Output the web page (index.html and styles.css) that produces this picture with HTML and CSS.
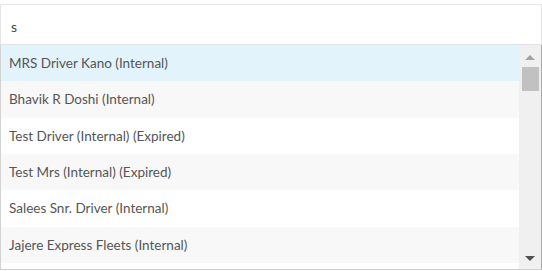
FILE: index.html
```html
<!DOCTYPE html>
<html lang="en">
<head>
  <meta charset="UTF-8">
  <title>Driver picker</title>
  <link rel="stylesheet" href="styles.css">
</head>
<body>
  <!-- Search field with its dropdown of matches -->
  <div class="picker">
    <div class="search">s</div>

    <div class="list">
      <ul class="rows">
        <li class="row active">MRS Driver Kano (Internal)</li>
        <li class="row">Bhavik R Doshi (Internal)</li>
        <li class="row">Test Driver (Internal) (Expired)</li>
        <li class="row">Test Mrs (Internal) (Expired)</li>
        <li class="row">Salees Snr. Driver (Internal)</li>
        <li class="row">Jajere Express Fleets (Internal)</li>
      </ul>

      <!-- Scrollbar drawn by hand -->
      <div class="scrollbar">
        <span class="arrow up"></span>
        <span class="thumb"></span>
        <span class="track"></span>
        <span class="arrow down"></span>
      </div>
    </div>
  </div>
</body>
</html>
```

FILE: styles.css
```css
/* Base page */
body {
  margin: 0;
  background: #ffffff;
  font-family: Lato, "Open Sans", sans-serif;
  font-size: 13.5px;
  color: #555555;
}

.picker {
  width: 542px;
  padding-top: 4px;
}

/* Search box */
.search {
  width: 530px;
  height: 39px;
  padding-left: 10px;
  border: 1px solid #e4e4e4;
  line-height: 43px;
  font-size: 14px;
  color: #444;
}

/* Dropdown list */
.list {
  display: flex;
  height: 224px;
  border-left: 1px solid #d2d2d2;
  border-right: 1px solid #a9a9a9;
  border-bottom: 1px solid #cfcfcf;
}

.rows {
  flex: 1;
  margin: 0;
  padding: 0;
  list-style: none;
}

.row {
  height: 36.33px;
  padding-left: 8px;
  line-height: 37px;
  white-space: nowrap;
}

.row:nth-child(even) {
  background: #f8f8f8;
}

.row.active {
  background: #e3f3fb;
}

/* Fake scrollbar */
.scrollbar {
  width: 22px;
  display: flex;
  flex-direction: column;
  align-items: center;
  background: #f0f0f0;
}

.arrow {
  width: 0;
  height: 0;
  border-left: 5px solid transparent;
  border-right: 5px solid transparent;
}

.arrow.up {
  margin: 10px 0 7px;
  border-bottom: 5px solid #a3a3a3;
}

.arrow.down {
  margin: 0 0 8px;
  border-top: 5px solid #505050;
}

.thumb {
  width: 17px;
  height: 24px;
  background: #c1c1c1;
}

.track {
  flex: 1;
}
```
